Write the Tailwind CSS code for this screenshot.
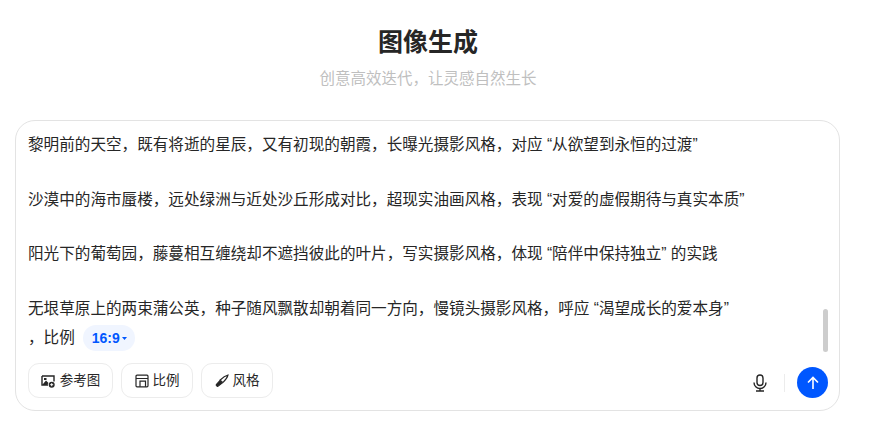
<!DOCTYPE html>
<html lang="zh-CN">
<head>
  <meta charset="UTF-8" />
  <title>图像生成</title>
  <script src="https://cdn.jsdelivr.net/npm/@tailwindcss/browser@4"></script>
</head>
<body class="bg-white font-['Liberation_Sans','Noto_Sans_CJK_SC',sans-serif] text-[#1f1f1f] h-[426px] overflow-hidden">
  <!-- Header -->
  <div class="w-[824px] ml-[16px] pt-[24px] text-center">
    <h1 class="text-[25px] leading-[36px] font-bold text-[#262626]">图像生成</h1>
    <p class="mt-[7px] text-[15.5px] leading-[24px] text-[#bfbfbf]">创意高效迭代，让灵感自然生长</p>
  </div>

  <!-- Prompt box -->
  <div class="relative w-[825px] h-[291px] ml-[15px] mt-[29px] border border-[#e3e3e3] rounded-[20px] bg-white">
    <div class="h-[232px] pl-[12px] pt-[11px] text-[15.6px] leading-[26px] text-[#262626] whitespace-nowrap overflow-hidden">
      <p>黎明前的天空，既有将逝的星辰，又有初现的朝霞，长曝光摄影风格，对应 “从欲望到永恒的过渡”</p>
      <p class="mt-[28.7px]">沙漠中的海市蜃楼，远处绿洲与近处沙丘形成对比，超现实油画风格，表现 “对爱的虚假期待与真实本质”</p>
      <p class="mt-[28.7px]">阳光下的葡萄园，藤蔓相互缠绕却不遮挡彼此的叶片，写实摄影风格，体现 “陪伴中保持独立” 的实践</p>
      <p class="mt-[28.7px]">无垠草原上的两束蒲公英，种子随风飘散却朝着同一方向，慢镜头摄影风格，呼应 “渴望成长的爱本身”</p>
      <div class="flex items-center mt-[2px] h-[28px]">
        <span>，比例</span>
        <span class="ml-[8px] h-[26px] pl-[9px] pr-[8px] flex items-center gap-[2px] rounded-full bg-[#f0f5ff] text-[#0057ff] text-[14px] font-bold">16:9
          <svg class="w-[5px] h-[3px]" viewBox="0 0 5 3"><path d="M0 0h5L2.5 3z" fill="#0057ff"/></svg>
        </span>
      </div>
    </div>

    <!-- Scrollbar -->
    <div class="absolute right-[11px] top-[188px] w-[5px] h-[43px] rounded-full bg-[#cdcdcd]"></div>

    <!-- Toolbar -->
    <div class="flex items-end justify-between pl-[12px] pr-[11px] mt-[10px]">
      <div class="flex items-center gap-[8px]">
        <button class="h-[35px] w-[85px] flex items-center justify-center gap-[5px] border border-[#ececec] rounded-[11px] text-[13.5px] leading-[20px] pt-[1px] text-[#262626]">
          <svg class="w-[14px] h-[14px]" viewBox="0 0 14 14">
            <path d="M1 2h12v5.5M1 2v9h6" fill="none" stroke="#262626" stroke-width="1.4"/>
            <path d="M2 10l3-3.5 2.5 2.5L6 11H2zM3 4h2.5v2H3z" fill="#262626"/>
            <circle cx="10.7" cy="10.7" r="3" fill="#262626"/>
            <path d="M10.7 9.2v3M9.2 10.7h3" stroke="#fff" stroke-width="1"/>
          </svg>
          参考图
        </button>
        <button class="h-[35px] w-[72px] flex items-center justify-center gap-[4px] border border-[#ececec] rounded-[11px] text-[13.5px] leading-[20px] pt-[1px] text-[#262626]">
          <svg class="w-[14px] h-[14px]" viewBox="0 0 14 14" fill="none" stroke="#262626" stroke-width="1.2">
            <rect x="1" y="1.2" width="12" height="11.6" rx="1"/>
            <path d="M1 4.5h12M5 12.8V7.2h5.5v5.6"/>
          </svg>
          比例
        </button>
        <button class="h-[35px] w-[72px] flex items-center justify-center gap-[4px] border border-[#ececec] rounded-[11px] text-[13.5px] leading-[20px] pt-[1px] text-[#262626]">
          <svg class="w-[14px] h-[14px]" viewBox="0 0 14 14" fill="none" stroke="#262626" stroke-width="1.1">
            <path d="M13 1C10.5 1.6 8 3.2 5.2 6l2.6 2.6C10.6 6 12.4 3.5 13 1z"/>
            <path d="M4.9 6.5L1.3 10.6c-.4.6 0 1 .4 1.3.4.4.9.8 1.5.2l4-3.2z" fill="#262626"/>
          </svg>
          风格
        </button>
      </div>
      <div class="flex items-center">
        <svg class="w-[16px] h-[18px]" viewBox="0 0 16 18" fill="none" stroke="#262626" stroke-width="1.4">
          <rect x="5" y="1" width="6" height="10.5" rx="3"/>
          <path d="M2 8.5a6 6 0 0 0 12 0M8 14.5V17M4 17h8"/>
        </svg>
        <div class="w-px h-[18px] bg-[#ececec] ml-[16px] mr-[12px]"></div>
        <button class="w-[31px] h-[31px] rounded-full bg-[#0057ff] flex items-center justify-center">
          <svg class="w-[14px] h-[14px]" viewBox="0 0 14 14" fill="none" stroke="#fff" stroke-width="1.6">
            <path d="M7 13V1.5M2 6.5l5-5 5 5"/>
          </svg>
        </button>
      </div>
    </div>
  </div>
</body>
</html>
